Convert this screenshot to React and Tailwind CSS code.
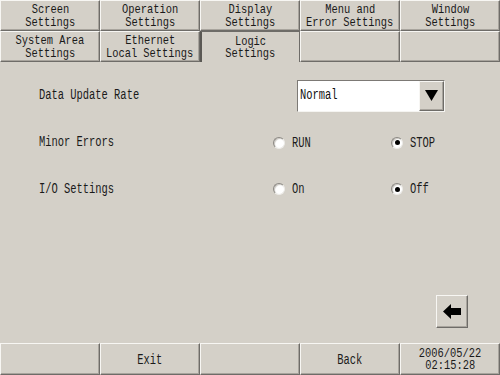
import React from "react";

const FONT = { fontFamily: '"Liberation Mono", "DejaVu Sans Mono", monospace' };

function T({ children, origin = "center", small }) {
  return (
    <span
      className={
        "inline-block whitespace-nowrap " +
        (small ? "scale-x-[0.8] " : "scale-x-[0.745] ") +
        (origin === "left" ? "origin-left" : "origin-center")
      }
    >
      {children}
    </span>
  );
}

const raised =
  "border-t border-l border-r border-b border-t-[#f7f6f3] border-l-[#f7f6f3] border-r-[#6e6c68] border-b-[#6e6c68] shadow-[inset_-1px_-1px_0_#a8a49d]";

function Btn({ lines, selected }) {
  const cls = selected
    ? "border-t border-l-2 border-r border-t-[#6e6c68] border-l-[#5a5854] border-r-[#6e6c68]"
    : raised;
  const two = lines.length > 1;
  return (
    <div
      className={
        "flex flex-col items-center justify-center pt-[2px] text-[#1a1a1a] overflow-visible " +
        (two ? "text-[13px] leading-[12.5px] " : "text-[14px] leading-[14px] ") +
        cls
      }
    >
      {lines.map((l, i) => (
        <div key={i} className="flex justify-center w-full">
          <T small={two}>{l}</T>
        </div>
      ))}
    </div>
  );
}

function Radio({ checked, label }) {
  return (
    <div className="flex items-center gap-[7px] w-[118px] shrink-0">
      <div className="w-[12px] h-[12px] shrink-0 rounded-full bg-white border border-t-[#8a8782] border-l-[#8a8782] border-r-[#ecebe8] border-b-[#ecebe8] shadow-[inset_1px_1px_1px_#c9c6c0] flex items-center justify-center">
        {checked && <div className="w-[5px] h-[5px] rounded-full bg-black" />}
      </div>
      <span className="text-[14px] text-[#1a1a1a] leading-none">
        <T origin="left">{label}</T>
      </span>
    </div>
  );
}

export default function App() {
  return (
    <div
      className="w-[500px] h-[375px] bg-[#d4d0c8] flex flex-col overflow-hidden"
      style={FONT}
    >
      <div className="grid grid-cols-5 grid-rows-[31px_31px]">
        <Btn lines={["Screen", "Settings"]} />
        <Btn lines={["Operation", "Settings"]} />
        <Btn lines={["Display", "Settings"]} />
        <Btn lines={["Menu and", "Error Settings"]} />
        <Btn lines={["Window", "Settings"]} />
        <Btn lines={["System Area", "Settings"]} />
        <Btn lines={["Ethernet", "Local Settings"]} />
        <Btn lines={["Logic", "Settings"]} selected />
        <Btn lines={[]} />
        <Btn lines={[]} />
      </div>

      <div className="flex-1 flex flex-col pt-[10px]">
        <div className="h-[47px] flex items-center">
          <div className="w-[297px] shrink-0 pl-[39px] text-[14px] text-[#1a1a1a]">
            <T origin="left">Data Update Rate</T>
          </div>
          <div className="w-[148px] h-[32px] shrink-0 flex border border-t-[#7c7975] border-l-[#7c7975] border-r-[#f5f4f1] border-b-[#f5f4f1]">
            <div className="flex-1 bg-white flex items-center pl-[2px] text-[14px] text-[#111]">
              <T origin="left">Normal</T>
            </div>
            <div className={"w-[25px] flex items-center justify-center bg-[#d4d0c8] " + raised}>
              <svg width="13" height="13" viewBox="0 0 13 13">
                <polygon points="0,1 13,1 6.5,12" fill="#000" />
              </svg>
            </div>
          </div>
        </div>
        <div className="h-[47px] flex items-center">
          <div className="w-[273px] shrink-0 pl-[39px] text-[14px] text-[#1a1a1a]">
            <T origin="left">Minor Errors</T>
          </div>
          <Radio label="RUN" />
          <Radio label="STOP" checked />
        </div>
        <div className="h-[46px] flex items-center">
          <div className="w-[273px] shrink-0 pl-[39px] text-[14px] text-[#1a1a1a]">
            <T origin="left">I/O Settings</T>
          </div>
          <Radio label="On" />
          <Radio label="Off" checked />
        </div>
        <div className="flex-1" />
        <div className="flex justify-end pr-[32px] pb-[15px]">
          <div className={"w-[32px] h-[33px] flex items-center justify-center " + raised}>
            <svg width="18" height="15" viewBox="0 0 18 15">
              <polygon points="0,7.5 8,0 8,4 18,4 18,11 8,11 8,15" fill="#000" />
            </svg>
          </div>
        </div>
      </div>

      <div className="grid grid-cols-5 h-[32px]">
        <Btn lines={[]} />
        <Btn lines={["Exit"]} />
        <Btn lines={[]} />
        <Btn lines={["Back"]} />
        <Btn lines={["2006/05/22", "02:15:28"]} />
      </div>
    </div>
  );
}
